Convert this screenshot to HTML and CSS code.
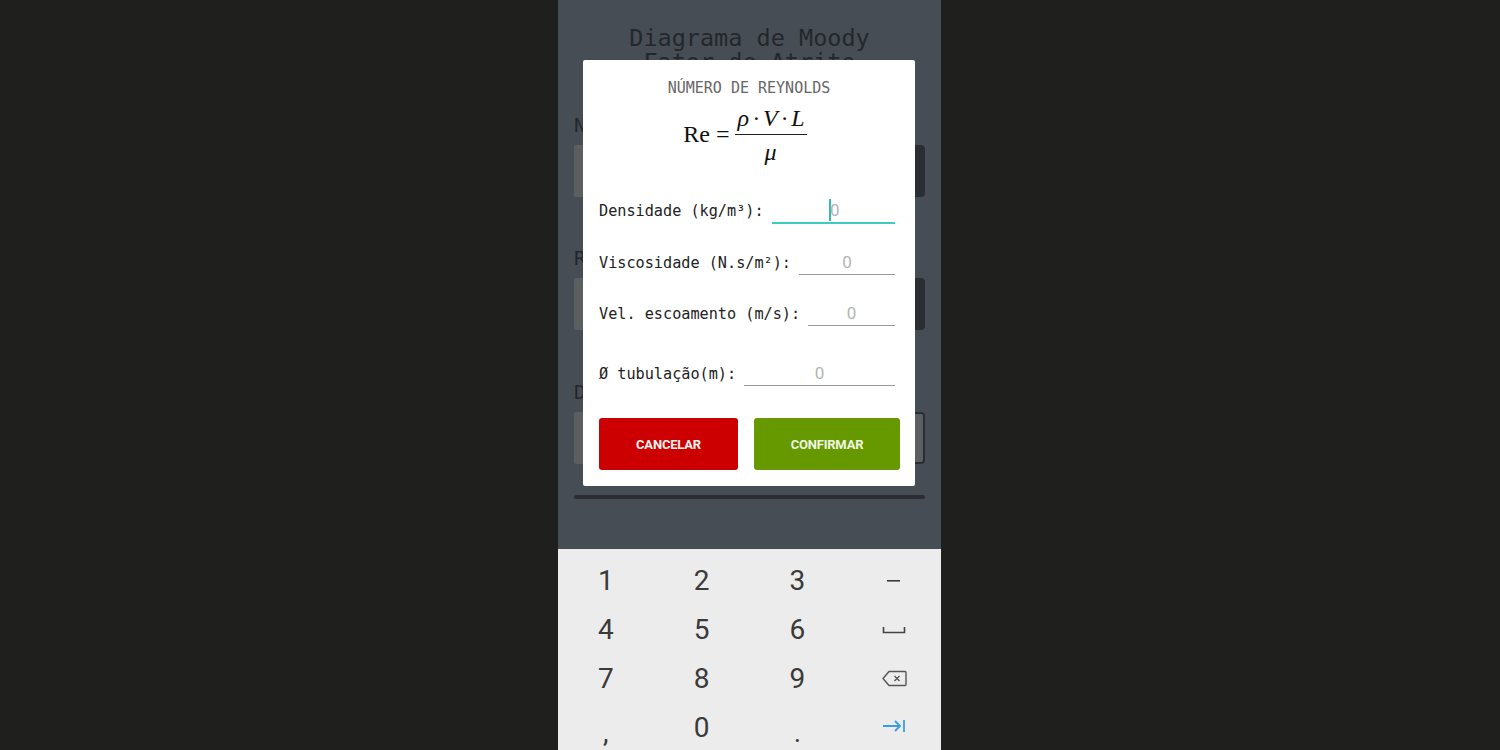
FILE: index.html
```html
<!DOCTYPE html>
<html lang="pt">
<head>
<meta charset="utf-8">
<title>Diagrama de Moody</title>
<link rel="stylesheet" href="styles.css">
</head>
<body>
<div class="phone">
  <div class="screen">
    <div class="bg-title">Diagrama de Moody<br>Fator de Atrito</div>
    <div class="bg-label l1">N</div>
    <div class="bg-box"><span class="bg-fill"></span><span class="bg-btn"></span></div>
    <div class="bg-label l2">R</div>
    <div class="bg-box"><span class="bg-fill"></span><span class="bg-btn"></span></div>
    <div class="bg-label l3">D</div>
    <div class="bg-box"><span class="bg-fill"></span><span class="bg-btn light"></span></div>
    <div class="bg-line"></div>
  </div>

  <div class="dialog">
    <div class="dlg-title">NÚMERO DE REYNOLDS</div>
    <div class="formula">
      <span class="re">Re =</span>
      <span class="frac"><span class="num">ρ · V · L</span><span class="den">μ</span></span>
    </div>
    <div class="field f1">
      <span class="lbl">Densidade (kg/m³):</span>
      <span class="inp active"><span class="caret"></span><span class="hint">0</span></span>
    </div>
    <div class="field f2">
      <span class="lbl">Viscosidade (N.s/m²):</span>
      <span class="inp"><span class="hint">0</span></span>
    </div>
    <div class="field f3">
      <span class="lbl">Vel. escoamento (m/s):</span>
      <span class="inp"><span class="hint">0</span></span>
    </div>
    <div class="field f4">
      <span class="lbl">Ø tubulação(m):</span>
      <span class="inp"><span class="hint">0</span></span>
    </div>
    <div class="buttons">
      <button class="btn cancel">CANCELAR</button>
      <button class="btn confirm">CONFIRMAR</button>
    </div>
  </div>

  <div class="keyboard">
    <div class="key">1</div><div class="key">2</div><div class="key">3</div>
    <div class="key icon"><svg width="14" height="4" viewBox="0 0 14 4"><rect x="0" y="1" width="13" height="1.6" fill="#3a3a3a"/></svg></div>
    <div class="key">4</div><div class="key">5</div><div class="key">6</div>
    <div class="key icon"><svg width="24" height="8" viewBox="0 0 24 8"><path d="M1.5 1v5.5h21V1" fill="none" stroke="#444" stroke-width="1.6"/></svg></div>
    <div class="key">7</div><div class="key">8</div><div class="key">9</div>
    <div class="key icon"><svg width="25" height="17" viewBox="0 0 25 17"><path d="M7 1.5h16a1 1 0 0 1 1 1v12a1 1 0 0 1-1 1H7L1 8.5z" fill="none" stroke="#555" stroke-width="1.4" stroke-linejoin="round"/><path d="M12.5 6l5 5M17.5 6l-5 5" stroke="#555" stroke-width="1.4"/></svg></div>
    <div class="key punct">,</div><div class="key">0</div><div class="key punct">.</div>
    <div class="key icon tab"><svg width="24" height="14" viewBox="0 0 24 14"><path d="M1 7h17M13 2l5 5-5 5" fill="none" stroke="#3a9ee0" stroke-width="1.8"/><path d="M22 1v12" stroke="#3a9ee0" stroke-width="1.8"/></svg></div>
  </div>
</div>
</body>
</html>
```
FILE: styles.css
```css
* { box-sizing: border-box; }
html, body { margin: 0; padding: 0; }
body {
  width: 1500px;
  height: 750px;
  background: #1f1f1e;
  display: flex;
  justify-content: center;
  overflow: hidden;
}
.phone {
  width: 383px;
  height: 750px;
  margin-left: -1px;
  display: flex;
  flex-direction: column;
  position: relative;
}
.screen {
  flex: 0 0 549px;
  background: #474d55;
  padding: 26px 16px 0;
  display: flex;
  flex-direction: column;
  font-family: "DejaVu Sans Mono", monospace;
  color: #23272c;
}
.bg-title {
  font-size: 23.5px;
  line-height: 24px;
  text-align: center;
}
.bg-label {
  font-size: 20px;
  line-height: 24px;
}
.l1 { margin-top: 39px; }
.l2 { margin-top: 49px; }
.l3 { margin-top: 50px; }
.bg-box {
  margin-top: 8px;
  height: 52px;
  display: flex;
}
.bg-fill {
  flex: 1;
  background: #5c5f62;
  border-radius: 2px 0 0 2px;
}
.bg-btn {
  width: 40px;
  background: #2a2e33;
  border-radius: 4px;
}
.bg-btn.light {
  background: #5c5f62;
  border: 2px solid #2a2e33;
}
.bg-line {
  margin-top: 31px;
  height: 4px;
  background: #2a2e33;
  border-radius: 2px;
}

.dialog {
  position: absolute;
  left: 25px;
  top: 60px;
  width: 332px;
  height: 426px;
  background: #ffffff;
  border-radius: 2px;
  padding: 18px 0 0 16px;
  display: flex;
  flex-direction: column;
}
.dlg-title {
  font-family: "DejaVu Sans Mono", monospace;
  font-size: 15px;
  line-height: 20px;
  color: #666;
  text-align: center;
  margin-right: 16px;
}
.formula {
  margin-top: 8px;
  display: flex;
  justify-content: center;
  align-items: flex-start;
  font-family: "Liberation Serif", serif;
  font-size: 24px;
  color: #111;
  margin-right: 20px;
}
.re {
  line-height: 24px;
  margin-top: 16px;
  margin-right: 5px;
  margin-left: -4px;
  white-space: pre;
}
.frac {
  display: flex;
  flex-direction: column;
  align-items: center;
}
.num {
  font-style: italic;
  line-height: 24px;
  padding: 0 2px 4px 3px;
  border-bottom: 1px solid #222;
  white-space: pre;
  word-spacing: -2px;
}
.den {
  font-style: italic;
  line-height: 24px;
  margin-top: 5px;
}
.field {
  display: flex;
  align-items: flex-end;
  padding-right: 20px;
  font-family: "DejaVu Sans Mono", monospace;
  font-size: 15.2px;
  color: #222;
}
.f1 { margin-top: 34px; }
.f2 { margin-top: 27px; }
.f3 { margin-top: 26px; }
.f4 { margin-top: 35px; }
.lbl {
  line-height: 20px;
  white-space: pre;
  padding-bottom: 1px;
}
.inp {
  flex: 1;
  margin-left: 8px;
  height: 26px;
  border-bottom: 1px solid #9a9a9a;
  display: flex;
  justify-content: center;
  align-items: center;
  font-family: Roboto, sans-serif;
  font-size: 17px;
  color: #b3b3b3;
  margin-bottom: -1px;
}
.inp.active {
  border-bottom: 2px solid #3ccbc0;
  margin-bottom: -2px;
  padding-left: 2px;
}
.caret {
  width: 2px;
  height: 22px;
  background: #2fbfb3;
  margin-right: -1px;
}
.hint { line-height: 20px; }
.buttons {
  margin-top: 33px;
  display: flex;
  gap: 16px;
}
.btn {
  height: 52px;
  border: none;
  border-radius: 3px;
  color: #f4f4ee;
  font-family: Roboto, "Liberation Sans", sans-serif;
  font-weight: 700;
  font-size: 13px;
  letter-spacing: -0.2px;
  padding: 0;
}
.cancel { width: 139px; background: #cc0000; }
.confirm { width: 146px; background: #669900; color: #f0f6e2; }

.keyboard {
  flex: 1;
  background: #ececec;
  padding-top: 7px;
  display: grid;
  grid-template-columns: repeat(4, 1fr);
  grid-auto-rows: 49px;
  font-family: Roboto, sans-serif;
  font-size: 28px;
  color: #3a3a3a;
}
.key {
  display: flex;
  align-items: center;
  justify-content: center;
  line-height: 1;
}
.key.punct { padding-top: 10px; }
.key.icon { padding-left: 2px; }
.key.tab { padding-bottom: 4px; }
```
